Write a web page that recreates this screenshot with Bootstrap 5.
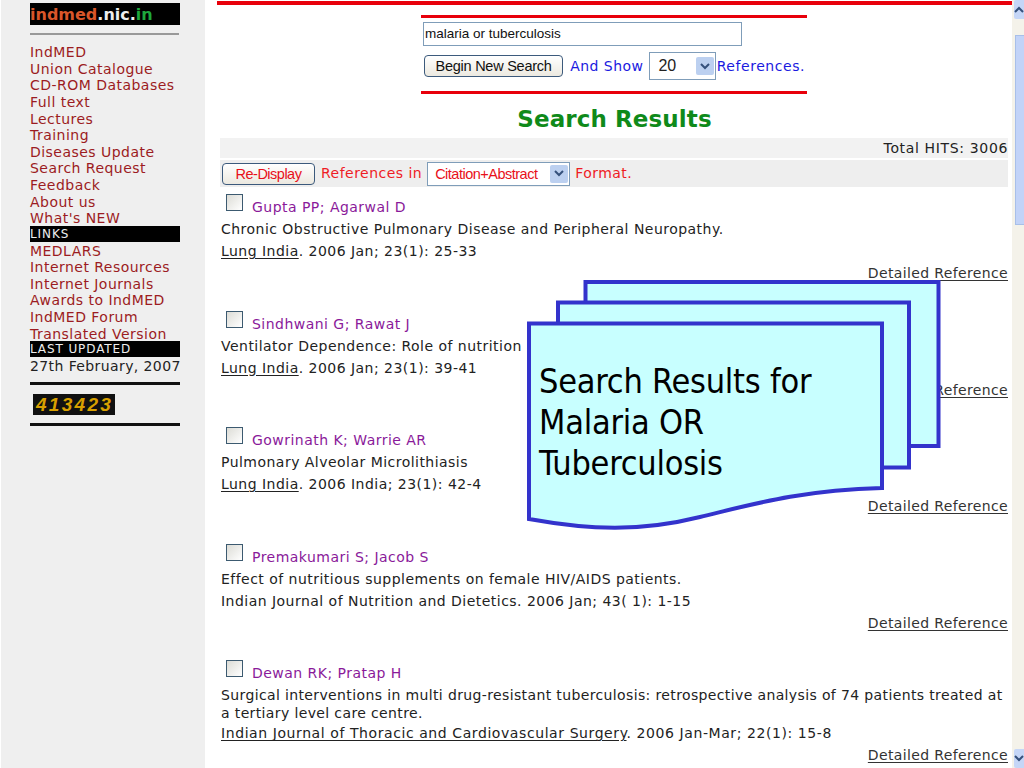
<!DOCTYPE html>
<html lang="en">
<head>
<meta charset="UTF-8">
<meta name="viewport" content="width=device-width, initial-scale=1.0">
<title>IndMED Search Results</title>
<link rel="stylesheet" href="https://cdn.jsdelivr.net/npm/bootstrap@5.3.3/dist/css/bootstrap.min.css">
<style>
html, body { height: 768px; overflow: hidden; }
body { font-family: "DejaVu Sans", sans-serif; font-size: 14px; letter-spacing: .47px; color: #222; background: #fff; }
.page-wrap { height: 768px; position: relative; }
.side-col { width: 204px; flex: none; margin-left: 1px; background: #efefef; padding: 3px 24px 0 29px; }
.side-logo { background: #000; height: 22px; width: 150px; font-weight: 700; font-size: 16px; line-height: 23px; letter-spacing: 0; white-space: nowrap; }
.side-logo .l1 { color: #d9562a; } .side-logo .l2 { color: #eee; } .side-logo .l3 { color: #1ea83c; }
.side-rule { height: 2px; width: 149px; background: #999; margin: 8px 0 9px; }
.side-link { display: block; height: 16.65px; line-height: 16.65px; color: #9c1c22; white-space: nowrap; text-decoration: none; }
.side-head { background: #000; color: #eee; height: 16px; line-height: 16px; font-size: 12px; letter-spacing: .9px; width: 150px; white-space: nowrap; margin-bottom: .5px; }
.side-link + .side-head { margin-top: -1px; }
.side-date { height: 16px; line-height: 16px; color: #222; white-space: nowrap; margin-top: .5px; letter-spacing: .4px; }
.side-black { height: 3px; width: 150px; background: #111; }
.hit-counter { background: #111; color: #d8a000; width: 82px; height: 21px; margin: 9px 0 8px 3px; font: italic 700 19px/21px "Liberation Sans", sans-serif; letter-spacing: 2.3px; padding-left: 3px; white-space: nowrap; }
.main-col { width: 807px; flex: none; padding: 1px 2px 0 12px; }
.top-red { height: 4px; background: #e8000b; width: 795px; }
.search-box { width: 386px; margin: 10px 0 0 204px; border-top: 3px solid #e8000b; border-bottom: 3px solid #e8000b; height: 79px; padding: 4px 2px 0; }
.q-input { width: 319px; height: 24px; border: 1px solid #7f9db9; font: 13.5px/20px "Liberation Sans", sans-serif; padding: 0 1px 2px; color: #111; display: block; border-radius: 0; }
.form-line { margin-top: 8px; height: 24px; margin-left: 1px; }
.old-btn { font: 14.5px "Liberation Sans", sans-serif; letter-spacing: -.25px; width: 141px; height: 22px; line-height: 18px; padding: 0; border: 1px solid #3c5a7c; border-radius: 4px; background: linear-gradient(#fff, #ece9e0); color: #111; white-space: nowrap; }
.blue-txt { color: #1a1ae0; white-space: nowrap; }
.blue-show { margin-left: 3px; }
.blue-ref { margin-left: -3px; letter-spacing: .55px; }
.fake-select { border: 1px solid #7f9db9; height: 28px; background: #fff; padding: 0 1px 0 8px; font: 16px "Liberation Sans", sans-serif; letter-spacing: 0; }
.num-sel { width: 67px; margin-left: 2px; }
.fake-arrow { width: 18px; height: 18px; background: #bcd0f0; border-radius: 2px; flex: none; }
.results-title { color: #0f8a1a; font-size: 23px; font-weight: 700; letter-spacing: .1px; line-height: 26px; text-align: center; margin: 12px 0 6px; padding-left: 2px; }
.hits-row { margin: 0 2px 0 3px; background: #f2f2f2; height: 20px; line-height: 20px; text-align: right; letter-spacing: .65px; }
.format-row { margin: 2px 2px 0 3px; background: #eeeeee; height: 27px; padding-left: 2px; }
.red-txt { color: #ee1c25; white-space: nowrap; }
.red-in { margin-left: 2px; }
.old-btn.small-red { color: #e8101a; width: 93px; letter-spacing: -.5px; }
.fake-select.red-sel { height: 24px; color: #e8101a; font-size: 14.5px; letter-spacing: -.5px; padding-left: 7px; width: 143px; margin-left: 1px; white-space: nowrap; }
.red-format { margin-left: 1px; }
.ref-list { padding-top: 4px; }
.ref-item { height: 116.6px; padding: 5px 2px 0 4px; }
.ref-author { height: 22px; color: #8a1a9a; line-height: 24px; }
.ref-check { width: 17px; height: 17px; border: 1px solid #3c5a70; background: linear-gradient(135deg, #dcdcd6, #fff); margin: 0 9px 9px 5px; flex: none; }
.ref-line { line-height: 22px; white-space: nowrap; }
.ref-wrap { line-height: 18px; margin-top: 2px; letter-spacing: .37px; }
.ref-long { letter-spacing: .58px; }
.ref-line u { text-underline-offset: 2px; }
.ref-detail { text-align: right; text-decoration: underline; line-height: 22px; color: #333; text-underline-offset: 2px; letter-spacing: .36px; }
.scroll-col { width: 12px; flex: none; background: #f4f2ea; position: relative; }
.scroll-btn { position: absolute; left: 2px; right: 0; height: 19px; background: #c5d6f7; border-radius: 2px 0 0 2px; }
.scroll-thumb { position: absolute; left: 3px; right: 0; top: 35px; height: 190px; background: #c2d3f8; border: 1px solid #a8bfe8; border-right: 0; }
.callout { position: absolute; left: 527px; top: 279px; width: 416px; height: 252px; }
.callout-text { position: absolute; left: 539px; top: 361px; width: 320px; font: 34px/41px "DejaVu Sans Condensed", "DejaVu Sans", sans-serif; color: #000; letter-spacing: -.25px; }
</style>
</head>
<body>
<div class="page-wrap d-flex">
  <div class="side-col">
    <div class="side-logo"><span class="l1">indmed</span><span class="l2">.nic.</span><span class="l3">in</span></div>
    <div class="side-rule"></div>
    <a class="side-link" href="#">IndMED</a>
    <a class="side-link" href="#">Union Catalogue</a>
    <a class="side-link" href="#">CD-ROM Databases</a>
    <a class="side-link" href="#">Full text</a>
    <a class="side-link" href="#">Lectures</a>
    <a class="side-link" href="#">Training</a>
    <a class="side-link" href="#">Diseases Update</a>
    <a class="side-link" href="#">Search Request</a>
    <a class="side-link" href="#">Feedback</a>
    <a class="side-link" href="#">About us</a>
    <a class="side-link" href="#">What's NEW</a>
    <div class="side-head">LINKS</div>
    <a class="side-link" href="#">MEDLARS</a>
    <a class="side-link" href="#">Internet Resources</a>
    <a class="side-link" href="#">Internet Journals</a>
    <a class="side-link" href="#">Awards to IndMED</a>
    <a class="side-link" href="#">IndMED Forum</a>
    <a class="side-link" href="#">Translated Version</a>
    <div class="side-head">LAST UPDATED</div>
    <div class="side-date">27th February, 2007</div>
    <div class="side-black mt-2"></div>
    <div class="hit-counter">413423</div>
    <div class="side-black"></div>
  </div>

  <div class="main-col">
    <div class="top-red"></div>
    <div class="search-box">
      <input class="q-input" type="text" value="malaria or tuberculosis">
      <div class="form-line d-flex align-items-center gap-1">
        <button class="old-btn" type="button">Begin New Search</button>
        <span class="blue-txt blue-show">And Show</span>
        <span class="fake-select num-sel d-flex align-items-center"><span class="flex-grow-1">20</span><span class="fake-arrow d-flex align-items-center justify-content-center"><svg width="10" height="7" viewBox="0 0 10 7"><path d="M1 1l4 4 4-4" fill="none" stroke="#35517c" stroke-width="2"/></svg></span></span>
        <span class="blue-txt blue-ref">References.</span>
      </div>
    </div>
    <div class="results-title">Search Results</div>
    <div class="hits-row">Total HITS: 3006</div>
    <div class="format-row d-flex align-items-center gap-1">
      <button class="old-btn small-red" type="button">Re-Display</button>
      <span class="red-txt red-in">References in</span>
      <span class="fake-select red-sel d-flex align-items-center"><span class="flex-grow-1">Citation+Abstract</span><span class="fake-arrow d-flex align-items-center justify-content-center"><svg width="10" height="7" viewBox="0 0 10 7"><path d="M1 1l4 4 4-4" fill="none" stroke="#35517c" stroke-width="2"/></svg></span></span>
      <span class="red-txt red-format">Format.</span>
    </div>

    <div class="ref-list">
    <div class="ref-item">
      <div class="ref-author d-flex align-items-center"><span class="ref-check"></span>Gupta PP; Agarwal D</div>
      <div class="ref-line">Chronic Obstructive Pulmonary Disease and Peripheral Neuropathy.</div>
      <div class="ref-line"><u>Lung India</u>. 2006 Jan; 23(1): 25-33</div>
      <div class="ref-detail">Detailed Reference</div>
    </div>
    <div class="ref-item">
      <div class="ref-author d-flex align-items-center"><span class="ref-check"></span>Sindhwani G; Rawat J</div>
      <div class="ref-line">Ventilator Dependence: Role of nutrition and pulmonary rehabilitation.</div>
      <div class="ref-line"><u>Lung India</u>. 2006 Jan; 23(1): 39-41</div>
      <div class="ref-detail">Detailed Reference</div>
    </div>
    <div class="ref-item">
      <div class="ref-author d-flex align-items-center"><span class="ref-check"></span>Gowrinath K; Warrie AR</div>
      <div class="ref-line">Pulmonary Alveolar Microlithiasis</div>
      <div class="ref-line"><u>Lung India</u>. 2006 India; 23(1): 42-4</div>
      <div class="ref-detail">Detailed Reference</div>
    </div>
    <div class="ref-item">
      <div class="ref-author d-flex align-items-center"><span class="ref-check"></span>Premakumari S; Jacob S</div>
      <div class="ref-line">Effect of nutritious supplements on female HIV/AIDS patients.</div>
      <div class="ref-line">Indian Journal of Nutrition and Dietetics. 2006 Jan; 43( 1): 1-15</div>
      <div class="ref-detail">Detailed Reference</div>
    </div>
    <div class="ref-item">
      <div class="ref-author d-flex align-items-center"><span class="ref-check"></span>Dewan RK; Pratap H</div>
      <div class="ref-wrap">Surgical interventions in multi drug-resistant tuberculosis: retrospective analysis of 74 patients treated at a tertiary level care centre.</div>
      <div class="ref-line ref-long"><u>Indian Journal of Thoracic and Cardiovascular Surgery</u>. 2006 Jan-Mar; 22(1): 15-8</div>
      <div class="ref-detail">Detailed Reference</div>
    </div>
    </div>
  </div>

  <div class="scroll-col">
    <div class="scroll-btn d-flex align-items-center justify-content-center" style="top:0"><svg width="10" height="7" viewBox="0 0 10 7"><path d="M1 6l4-4 4 4" fill="none" stroke="#35517c" stroke-width="2"/></svg></div>
    <div class="scroll-thumb"></div>
    <div class="scroll-btn d-flex align-items-center justify-content-center" style="bottom:0"><svg width="10" height="7" viewBox="0 0 10 7"><path d="M1 1l4 4 4-4" fill="none" stroke="#35517c" stroke-width="2"/></svg></div>
  </div>

  <svg class="callout" viewBox="527 279 416 252">
    <g fill="#c8ffff" stroke="#3333cc" stroke-width="4">
      <rect x="585.5" y="282" width="353" height="164"/>
      <rect x="558" y="302.5" width="351" height="165"/>
      <path d="M529 323.5H882V488C800 490 750 505 700 517C640 532 590 530 529 519Z"/>
    </g>
  </svg>
  <div class="callout-text">Search Results for Malaria OR Tuberculosis</div>
</div>
</body>
</html>
